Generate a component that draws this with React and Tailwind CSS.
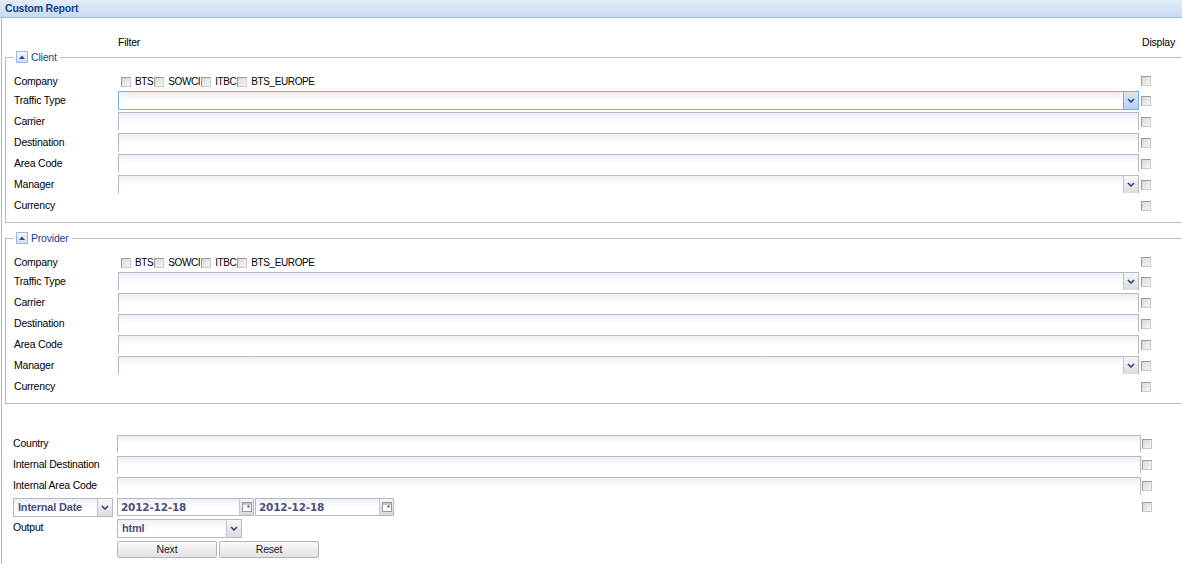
import React from "react";

const companies = ["BTS", "SOWCI", "ITBC", "BTS_EUROPE"];
const rows = ["Traffic Type", "Carrier", "Destination", "Area Code", "Manager"];
const combos = { "Traffic Type": true, Manager: true };

const Check = () => (
  <span className="inline-block w-[10px] h-[10px] shrink-0 border border-[#9a9a9a] border-r-[#cacaca] border-b-[#cacaca] bg-[linear-gradient(135deg,#d8d8d8,#f6f6f6)]" />
);

const Arrow = () => (
  <svg width="8" height="5" viewBox="0 0 8 5">
    <path d="M1 1l3 3 3-3" fill="none" stroke="#2d4f86" strokeWidth="1.7" />
  </svg>
);

const Trigger = ({ active }) => (
  <span
    className={`w-[15px] self-stretch flex items-center justify-center border-l ${
      active
        ? "border-[#7eadd9] bg-[linear-gradient(#d9e7f8,#b7cfee)]"
        : "border-[#c5c8d4] bg-[linear-gradient(#f7f7f7,#dcdcdc)]"
    }`}
  >
    <Arrow />
  </span>
);

const Cal = () => (
  <span className="w-[14px] self-stretch flex items-center justify-center border-l border-[#c5c8d4] bg-[linear-gradient(#f5f5f5,#d8d8d8)]">
    <svg width="10" height="10" viewBox="0 0 10 10">
      <rect x="0.5" y="0.5" width="9" height="9" fill="#fff" stroke="#8d99ab" />
      <rect x="1" y="1" width="8" height="2" fill="#b9c8dc" />
      <circle cx="6.5" cy="4.5" r="1.2" fill="#d23a3a" />
    </svg>
  </span>
);

const Field = ({ combo, active, tall }) => (
  <div
    className={`flex ${tall ? "h-[19px]" : "h-[18px]"} border ${
      active ? "border-[#7eadd9]" : "border-[#b5b8c8] border-b-white"
    } bg-[linear-gradient(#eceff3,#fff_55%)]`}
  >
    <div className="flex-1" />
    {combo && <Trigger active={active} />}
  </div>
);

const Group = ({ title, focused }) => (
  <fieldset className="border border-[#b5b8c8] ml-[3px] -mr-[6px] pl-[8px] pt-[7px] pb-[6px]">
    <legend className="pl-[2px] pr-[3px] flex items-center gap-[3px] text-[#15428b] leading-[12px]">
      <span className="w-[12px] h-[12px] flex items-center justify-center border border-[#99bbe8] bg-[linear-gradient(#f3f8fd,#cddff4)]">
        <svg width="6" height="4" viewBox="0 0 6 4">
          <path d="M0 4L3 0.5 6 4z" fill="#2d4f86" />
        </svg>
      </span>
      {title}
    </legend>

    <div className="grid grid-cols-[104px_1021px_12px] items-center h-[20px] pt-[3px]">
      <span>Company</span>
      <div className="flex items-center pl-[3px]">
        {companies.map((c) => (
          <React.Fragment key={c}>
            <Check />
            <span className="ml-[4px] mr-[1px] text-[10px] tracking-[-0.4px]">{c}</span>
          </React.Fragment>
        ))}
      </div>
      <span className="ml-[2px] flex -mt-[2px]"><Check /></span>
    </div>

    {rows.map((r) => (
      <div key={r} className="grid grid-cols-[104px_1021px_12px] items-center h-[21px]">
        <span>{r}</span>
        <Field tall combo={combos[r]} active={focused && r === "Traffic Type"} />
        <span className="ml-[2px] flex"><Check /></span>
      </div>
    ))}

    <div className="grid grid-cols-[104px_1021px_12px] items-center h-[21px]">
      <span>Currency</span>
      <span />
      <span className="ml-[2px] flex"><Check /></span>
    </div>
  </fieldset>
);

const Combo = ({ text, w }) => (
  <div className={`flex ${w} h-[19px] border border-[#b5b8c8] bg-[linear-gradient(#eceff3,#fff_55%)]`}>
    <span className="flex-1 pl-[4px] leading-[17px] font-bold text-[11px] text-[#4f4f7a]">{text}</span>
    <Trigger />
  </div>
);

const DateField = ({ w }) => (
  <div className={`flex ${w} h-[18px] border border-[#b5b8c8] bg-[linear-gradient(#eceff3,#fff_55%)]`}>
    <span className="flex-1 pl-[3px] leading-[16px] font-bold text-[10.5px] text-[#4f4f7a] font-['DejaVu_Sans',sans-serif]">
      2012-12-18
    </span>
    <Cal />
  </div>
);

export default function App() {
  return (
    <div className="w-full h-[564px] overflow-hidden bg-white text-black text-[10.5px] tracking-[-0.2px] font-['Liberation_Sans',Arial,sans-serif]">
      <div className="h-[18px] border-b border-[#99bbe8] bg-[linear-gradient(#e3ecf8,#c9daf0)] pl-[5px] leading-[16px] font-bold text-[#15428b]">
        Custom Report
      </div>

      <div className="ml-[1px] border-l border-[#99bbe8] h-full">
        <div className="grid grid-cols-[116px_1024px_auto] h-[33px] pt-[18px] leading-[13px]">
          <span />
          <span>Filter</span>
          <span>Display</span>
        </div>

        <Group title="Client" focused />
        <div className="h-[9px]" />
        <Group title="Provider" />

        <div className="pl-[11px] pt-[29px]">
          {["Country", "Internal Destination", "Internal Area Code"].map((r) => (
            <div key={r} className="grid grid-cols-[104px_1024px_12px] items-center h-[21px]">
              <span>{r}</span>
              <Field />
              <span className="ml-[1px] flex"><Check /></span>
            </div>
          ))}

          <div className="flex items-center h-[22px]">
            <Combo text="Internal Date" w="w-[100px]" />
            <div className="ml-[4px]"><DateField w="w-[137px]" /></div>
            <div className="ml-[1px]"><DateField w="w-[139px]" /></div>
            <span className="ml-[748px] flex"><Check /></span>
          </div>

          <div className="grid grid-cols-[104px_auto] items-center h-[20px]">
            <span>Output</span>
            <Combo text="html" w="w-[125px]" />
          </div>

          <div className="flex gap-[2px] ml-[104px] mt-[3px]">
            {["Next", "Reset"].map((b) => (
              <button
                key={b}
                className="w-[100px] h-[17px] border border-[#b3b3b3] rounded-[2px] bg-[linear-gradient(#fbfbfb,#e2e2e2)] leading-[15px] text-[10.5px] text-[#222]"
              >
                {b}
              </button>
            ))}
          </div>
        </div>
      </div>
    </div>
  );
}
